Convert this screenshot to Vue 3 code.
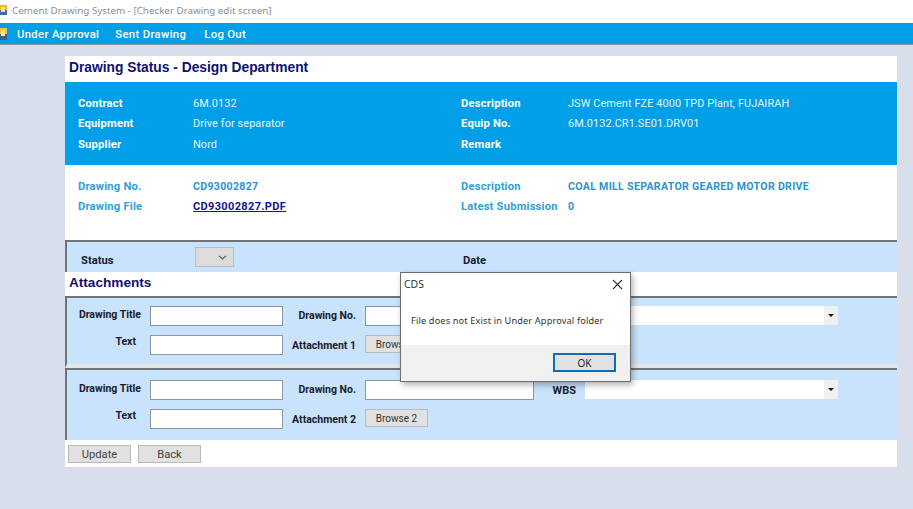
<script setup>
const header = [
  ['Contract', '6M.0132', 'Description', 'JSW Cement FZE 4000 TPD Plant, FUJAIRAH'],
  ['Equipment', 'Drive for separator', 'Equip No.', '6M.0132.CR1.SE01.DRV01'],
  ['Supplier', 'Nord', 'Remark', ''],
]
const attachments = [1, 2]
</script>

<template>
  <div class="screen">
    <div class="titlebar">
      <svg class="appicon" width="7" height="10" viewBox="0 0 7 10">
        <rect x="0" y="0" width="7" height="5" fill="#f2b632" />
        <rect x="0" y="5" width="7" height="5" fill="#3d6ea8" />
        <rect x="1" y="2" width="4" height="5" fill="#f7e08a" />
      </svg>
      <span>Cement Drawing System - [Checker Drawing edit screen]</span>
    </div>
    <div class="menubar">
      <svg class="appicon" width="9" height="12" viewBox="0 0 9 12">
        <rect x="0" y="0" width="7" height="6" fill="#f6c33c" />
        <rect x="0" y="6" width="7" height="6" fill="#35618f" />
        <rect x="1" y="2" width="4" height="6" fill="#f9e9a4" />
      </svg>
      <a>Under Approval</a>
      <a>Sent Drawing</a>
      <a class="logout">Log Out</a>
    </div>

    <div class="card">
      <h1 class="heading">Drawing Status - Design Department</h1>

      <div class="info">
        <template v-for="row in header" :key="row[0]">
          <b>{{ row[0] }}</b>
          <span>{{ row[1] }}</span>
          <b>{{ row[2] }}</b>
          <span>{{ row[3] }}</span>
        </template>
      </div>

      <div class="drawing">
        <b>Drawing No.</b>
        <strong>CD93002827</strong>
        <b>Description</b>
        <strong>COAL MILL SEPARATOR GEARED MOTOR DRIVE</strong>
        <b>Drawing File</b>
        <a class="file">CD93002827.PDF</a>
        <b>Latest Submission</b>
        <strong>0</strong>
      </div>

      <div class="status">
        <label class="status-label">Status</label>
        <div class="status-select">
          <svg width="9" height="5" viewBox="0 0 9 5"><path d="M1 .8 4.5 4 8 .8" fill="none" stroke="#555" stroke-width="1.1" /></svg>
        </div>
        <label class="date-label">Date</label>
      </div>

      <h2 class="heading small">Attachments</h2>

      <div v-for="n in attachments" :key="n" class="panel" :class="'panel-' + n">
        <label class="right title-label">Drawing Title</label>
        <div class="input"></div>
        <label class="right no-label">Drawing No.</label>
        <div class="input"></div>
        <label class="wbs">WBS</label>
        <div class="combo"><i class="arrow"></i></div>
        <label class="right text-label">Text</label>
        <div class="input"></div>
        <label class="right">Attachment {{ n }}</label>
        <button class="browse">Browse {{ n }}</button>
      </div>

      <div class="actions">
        <button class="act">Update</button>
        <button class="act">Back</button>
      </div>
    </div>

    <div class="dialog">
      <div class="dialog-title">
        <span>CDS</span>
        <svg width="11" height="11" viewBox="0 0 11 11"><path d="M1 1 10 10M10 1 1 10" stroke="#333" stroke-width="1.1" /></svg>
      </div>
      <div class="dialog-body">File does not Exist in Under Approval folder</div>
      <div class="dialog-foot"><button class="ok">OK</button></div>
    </div>
  </div>
</template>

<style>
html, body { margin: 0; background: #d8dfeb; }
</style>

<style scoped>
.screen {
  position: relative;
  width: 913px;
  height: 509px;
  overflow: hidden;
  background: #d8dfeb;
  font-family: Roboto, "Liberation Sans", sans-serif;
}
.titlebar {
  height: 23px;
  box-sizing: border-box;
  padding-bottom: 3px;
  display: flex;
  align-items: center;
  gap: 5px;
  background: #fff;
  color: #8d8d8d;
  font-family: "Noto Sans", sans-serif;
  font-size: 9.8px;
}
.appicon { flex: none; }
.menubar {
  height: 22px;
  box-sizing: border-box;
  padding-top: 1px;
  display: flex;
  align-items: center;
  gap: 16px;
  background: #029fe9;
  border-bottom: 1px solid #8b9aa8;
  color: #fff;
  font-size: 11.3px;
  font-weight: 500;
  letter-spacing: 0.33px;
}
.menubar .appicon { margin-right: -8px; }
.logout { margin-left: 2px; }
.card {
  width: 832px;
  height: 411px;
  margin: 11px 0 0 65px;
  background: #fff;
}
.heading {
  margin: 0;
  height: 26px;
  padding-left: 4px;
  color: #10106e;
  font-family: "Liberation Sans", sans-serif;
  font-size: 13.8px;
  font-weight: 700;
  line-height: 23px;
  box-sizing: border-box;
}
.heading.small { height: 24px; line-height: 22px; font-size: 13.6px; }
.info, .drawing {
  display: grid;
  grid-template-columns: 115px 268px 107px 1fr;
  padding-left: 13px;
  font-size: 11.2px;
}
.info {
  height: 83px;
  box-sizing: border-box;
  padding-top: 11px;
  grid-auto-rows: 20.5px;
  background: #029fe9;
  color: #fff;
  align-items: center;
}
.info b, .drawing b { font-weight: 700; letter-spacing: 0.2px; }
.info span { font-size: 10.9px; font-weight: 400; color: #e6f5fd; letter-spacing: 0.1px; }
.drawing {
  height: 75px;
  box-sizing: border-box;
  padding-top: 11px;
  grid-auto-rows: 20px;
  align-items: center;
  color: #2f9fd8;
}
.drawing strong { font-size: 10.6px; font-weight: 700; color: #2a94cf; letter-spacing: 0.3px; }
.file { font-size: 11px; color: #14148c; font-weight: 700; text-decoration: underline; letter-spacing: 0.35px; }
.status {
  height: 32px;
  display: flex;
  box-sizing: border-box;
  background: #c9e3fc;
  border-top: 2px solid #6f7478;
  border-left: 2px solid #6f7478;
  color: #17202a;
  font-size: 11.2px;
  font-weight: 700;
}
.status-label { margin: 12px 0 0 14px; width: 114px; }
.status-select {
  width: 39px;
  height: 20px;
  margin-top: 5px;
  display: flex;
  align-items: center;
  justify-content: flex-end;
  padding-right: 6px;
  box-sizing: border-box;
  background: #dcdcdc;
  border: 1px solid #bcbcbc;
}
.date-label { margin: 12px 0 0 229px; }
.panel {
  display: grid;
  grid-template-columns: 74px 133px 64px 169px 33px 253px;
  grid-template-rows: 20px 20px;
  column-gap: 9px;
  row-gap: 9px;
  box-sizing: border-box;
  height: 72px;
  align-items: center;
  background: #c9e3fc;
  border-left: 2px solid #6f7478;
  color: #17202a;
  font-size: 10.5px;
  font-weight: 700;
}
.panel-1 {
  border-top: 2px solid #6f7478;
  border-bottom: 4px solid #e3e6ea;
  padding-top: 8px;
}
.panel-2 {
  border-top: 2px solid #6f7478;
  padding-top: 10px;
}
.right { text-align: right; white-space: nowrap; }
.title-label { margin-bottom: 3px; }
.no-label { margin-bottom: 1px; }
.text-label { margin-bottom: 7px; padding-right: 5px; }
.input {
  height: 20px;
  box-sizing: border-box;
  background: #fff;
  border: 1px solid #8b97a5;
}
.wbs { text-align: right; font-size: 11px; }
.panel-1 .wbs { visibility: hidden; }
.combo {
  height: 19px;
  align-self: start;
  background: #fff;
  position: relative;
}
.arrow {
  position: absolute;
  right: 0;
  top: 0;
  width: 14px;
  height: 19px;
  background: #f0f0f0;
}
.arrow::after {
  content: "";
  position: absolute;
  left: 4px;
  top: 8px;
  border-left: 3px solid transparent;
  border-right: 3px solid transparent;
  border-top: 3px solid #111;
}
button {
  font-family: Roboto, "Liberation Sans", sans-serif;
  padding: 0;
  cursor: pointer;
}
.browse {
  width: 63px;
  height: 18px;
  align-self: start;
  background: #e1e1e1;
  border: 1px solid #b8bcc0;
  color: #333;
  font-size: 10px;
  font-weight: 400;
}
.actions {
  display: flex;
  gap: 7px;
  padding: 5px 0 0 3px;
}
.act {
  width: 63px;
  height: 18px;
  background: #e1e1e1;
  border: 1px solid #b8b8b8;
  color: #444;
  font-size: 11.2px;
}
.dialog {
  position: absolute;
  left: 400px;
  top: 272px;
  width: 231px;
  height: 110px;
  box-sizing: border-box;
  display: flex;
  flex-direction: column;
  background: #fff;
  border: 1px solid #6e6e6e;
  box-shadow: 2px 3px 6px rgba(0, 0, 0, 0.3);
  font-family: "Noto Sans", sans-serif;
  color: #333;
}
.dialog-title {
  height: 22px;
  display: flex;
  align-items: center;
  justify-content: space-between;
  padding: 0 7px 0 3px;
  font-size: 10.4px;
}
.dialog-body {
  height: 50px;
  padding: 19px 0 0 10px;
  box-sizing: border-box;
  font-size: 9.2px;
  letter-spacing: 0.15px;
}
.dialog-foot {
  flex: 1;
  display: flex;
  justify-content: flex-end;
  align-items: flex-start;
  padding: 8px 14px 0 0;
  background: #f0f0f0;
}
.ok {
  width: 63px;
  height: 19px;
  background: #e1e1e1;
  border: 2px solid #0f6cb8;
  color: #222;
  font-family: "Noto Sans", sans-serif;
  font-size: 10px;
}
</style>
